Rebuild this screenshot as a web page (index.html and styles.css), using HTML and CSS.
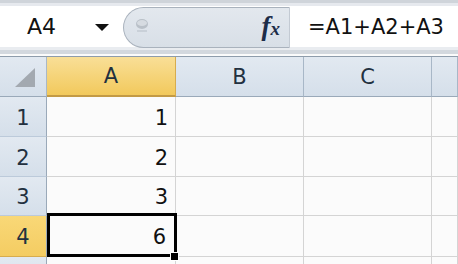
FILE: index.html
```html
<!DOCTYPE html>
<html lang="en">
<head>
  <meta charset="UTF-8">
  <title>Sheet</title>
  <link rel="stylesheet" href="styles.css">
</head>
<body>

<div class="formula-bar">
  <div class="name-box">
    <span class="name">A4</span>
    <span class="arrow"></span>
  </div>
  <div class="fx-area">
    <svg class="grip" width="14" height="18" viewBox="0 0 14 18">
      <ellipse cx="7" cy="6" rx="6" ry="5" fill="#b9c0c8"/>
      <ellipse cx="7" cy="5" rx="5" ry="3" fill="#d6dbe1"/>
      <rect x="2" y="12" width="10" height="2" fill="#c9d0d8"/>
    </svg>
    <span class="fx">f<span class="fx-x">x</span></span>
  </div>
  <div class="formula">=A1+A2+A3</div>
</div>

<div class="sheet">
  <div class="corner"><span class="tri"></span></div>
  <div class="col-head active">A</div>
  <div class="col-head">B</div>
  <div class="col-head">C</div>
  <div class="col-head"></div>

  <div class="row-head">1</div>
  <div class="cell">1</div>
  <div class="cell"></div>
  <div class="cell"></div>
  <div class="cell"></div>

  <div class="row-head">2</div>
  <div class="cell">2</div>
  <div class="cell"></div>
  <div class="cell"></div>
  <div class="cell"></div>

  <div class="row-head">3</div>
  <div class="cell">3</div>
  <div class="cell"></div>
  <div class="cell"></div>
  <div class="cell"></div>

  <div class="row-head active">4</div>
  <div class="cell selected">6<span class="handle"></span></div>
  <div class="cell"></div>
  <div class="cell"></div>
  <div class="cell"></div>

  <div class="row-head"></div>
  <div class="cell"></div>
  <div class="cell"></div>
  <div class="cell"></div>
  <div class="cell"></div>
</div>

</body>
</html>
```

FILE: styles.css
```css
body {
  margin: 0;
  background: #fbfbfb;
  font-family: 'DejaVu Sans', sans-serif;
  overflow: hidden;
}

.formula-bar {
  display: flex;
  height: 41px;
  background: #fff;
  border-top: 3px solid #e6e9ee;
  border-bottom: 3px solid #e9ecf0;
  box-shadow: 0 -3px 0 #cfd4da, 0 4px 0 #d3d8de;
  margin-top: 3px;
  margin-bottom: 6px;
}

.name-box {
  width: 123px;
  display: flex;
  align-items: center;
  background: #fff;
}

.name {
  font-size: 22px;
  color: #111;
  margin-left: 27px;
}

.arrow {
  margin-left: 39px;
  margin-top: 2px;
  border-left: 7px solid transparent;
  border-right: 7px solid transparent;
  border-top: 7px solid #111;
}

.fx-area {
  width: 167px;
  display: flex;
  align-items: center;
  justify-content: space-between;
  background: linear-gradient(#e3e8ee, #d8dfe7);
  border: 1px solid #a9b2bd;
  border-right-color: #c3cad3;
  border-radius: 22px 0 0 22px;
  box-sizing: border-box;
  margin: 1px 0 -1px;
  padding: 0 9px 0 11px;
}

.grip {
  margin-bottom: 2px;
}

.fx {
  font-family: 'Liberation Serif', serif;
  font-style: italic;
  font-weight: bold;
  font-size: 27px;
  line-height: 1;
  color: #1d2d48;
  margin-bottom: 3px;
}

.fx-x {
  font-size: 19px;
}

.formula {
  flex: 1;
  display: flex;
  align-items: center;
  padding-left: 18px;
  font-size: 21px;
  color: #111;
  background: #fff;
}

.sheet {
  display: grid;
  grid-template-columns: 47px 129px 128px 128px 1fr;
  grid-template-rows: 40px 40px 40px 39px 41px 40px;
  border-top: 1px solid #8e9cab;
}

.corner,
.col-head,
.row-head {
  background: linear-gradient(#e2e9f1, #d5dfea);
  color: #22303f;
  font-size: 21px;
  display: flex;
  align-items: center;
  justify-content: center;
  box-sizing: border-box;
}

.corner {
  border-right: 1px solid #aab8c6;
  border-bottom: 1px solid #9aa9b9;
}

.tri {
  width: 0;
  height: 0;
  border-left: 20px solid transparent;
  border-bottom: 19px solid #a3a9b0;
  margin: 2px 0 0 4px;
}

.col-head {
  border-right: 1px solid #a8b7c7;
  border-bottom: 1px solid #9aa9b9;
}

.col-head.active {
  background: linear-gradient(#f9df97, #f2c95c);
  border-color: #d7ac4e;
  border-bottom: 2px solid #c39a45;
}

.row-head {
  border-right: 1px solid #9aa9b9;
  border-bottom: 1px solid #bccada;
  padding-top: 2px;
}

.row-head.active {
  background: linear-gradient(#f9d877, #f4cc62);
  border-bottom-color: #d7ac4e;
}

.cell {
  border-right: 1px solid #d4d4d4;
  border-bottom: 1px solid #d4d4d4;
  font-size: 21px;
  color: #111;
  display: flex;
  align-items: center;
  justify-content: flex-end;
  padding: 2px 7px 0 0;
  box-sizing: border-box;
}

.cell.selected {
  position: relative;
  padding-right: 9px;
}

.cell.selected::after {
  content: "";
  position: absolute;
  top: -3px;
  left: 0;
  right: -2px;
  bottom: -1px;
  border: 3px solid #000;
}

.handle {
  position: absolute;
  right: -4px;
  bottom: -5px;
  width: 7px;
  height: 7px;
  background: #000;
  border: 1px solid #fff;
  z-index: 1;
}
```
